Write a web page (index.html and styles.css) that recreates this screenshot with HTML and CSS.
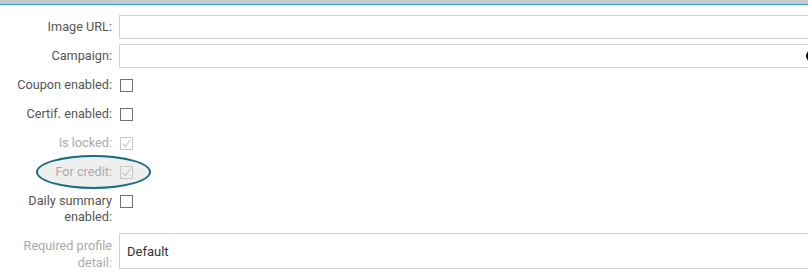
FILE: index.html
```html
<!DOCTYPE html>
<html lang="en">

<head>
    <meta charset="UTF-8">
    <title>Course settings</title>
    <link rel="stylesheet" href="styles.css">
</head>

<body>
    <div class="topbar"></div>
    <div class="form">
        <div class="row">
            <label class="lbl">Image URL:</label>
            <input type="text" class="in">
        </div>
        <div class="row">
            <label class="lbl">Campaign:</label>
            <div class="field">
                <input type="text" class="in">
                <span class="dot"></span>
            </div>
        </div>
        <div class="row">
            <label class="lbl">Coupon enabled:</label>
            <input type="checkbox" class="cb">
        </div>
        <div class="row">
            <label class="lbl">Certif. enabled:</label>
            <input type="checkbox" class="cb">
        </div>
        <div class="row">
            <label class="lbl off">Is locked:</label>
            <input type="checkbox" class="cb" checked disabled>
        </div>
        <div class="row marked">
            <span class="ring"></span>
            <label class="lbl off">For credit:</label>
            <input type="checkbox" class="cb" checked disabled>
        </div>
        <div class="row top">
            <label class="lbl">Daily summary<br>enabled:</label>
            <input type="checkbox" class="cb">
        </div>
        <div class="row top last">
            <label class="lbl off">Required profile<br>detail:</label>
            <input type="text" class="in big" value="Default" disabled>
        </div>
    </div>
</body>

</html>
```

FILE: styles.css
```css
body {
    font-family: Roboto, "Liberation Sans", sans-serif;
    font-size: 12.7px;
    margin: 0;
    background: #fff;
    overflow: hidden;
}

.topbar {
    height: 4px;
    background-color: #c9c9c9;
    border-bottom: 1px solid #2b9ad3;
}

.form {
    display: flex;
    flex-direction: column;
    gap: 5px;
    padding-top: 10px;
    width: 900px;
}

.row {
    display: flex;
    align-items: center;
    gap: 7px;
    min-height: 24px;
}

.row.top {
    align-items: flex-start;
}

.lbl {
    width: 112px;
    text-align: right;
    color: #555;
    line-height: 16px;
    flex-shrink: 0;
}

.lbl.off {
    color: #aaa;
}

.row.top .lbl {
    padding-top: 4px;
}

.row.top .cb {
    margin-top: 6px;
}

.row.last {
    margin-top: 3px;
}

.row.last .lbl {
    line-height: 17px;
    padding-top: 4px;
}

.field {
    position: relative;
    flex: 1;
    display: flex;
}

.in {
    flex: 1;
    height: 24px;
    box-sizing: border-box;
    border: 1px solid #d2d2d2;
    padding: 0 7px;
    font-family: inherit;
    font-size: 13px;
    color: #333;
    background: #fff;
    margin: 0;
}

.in.big {
    height: 36px;
}

.dot {
    position: absolute;
    left: 687px;
    top: 7px;
    width: 8px;
    height: 10px;
    border-radius: 50%;
    background: #111;
}

.cb {
    appearance: none;
    width: 13px;
    height: 13px;
    margin: 0 0 0 1px;
    border: 1px solid #6f6f6f;
    background: #fff;
    box-sizing: border-box;
}

.cb:disabled {
    border-color: #c8c8c8;
    background: #fff url("data:image/svg+xml,%3Csvg xmlns='http://www.w3.org/2000/svg' width='11' height='11'%3E%3Cpath d='M1.5 5.5 L4.5 8.5 L9.5 1.5' fill='none' stroke='%23c4c4c4' stroke-width='1.1'/%3E%3C/svg%3E") no-repeat center;
}

.marked {
    position: relative;
}

.ring {
    position: absolute;
    left: 36px;
    top: -5px;
    width: 115px;
    height: 34px;
    box-sizing: border-box;
    border: 2px solid #186f80;
    border-radius: 50%;
    background: #efefef;
}

.marked .lbl,
.marked .cb {
    position: relative;
}

.marked .cb {
    background-color: transparent;
}
```
